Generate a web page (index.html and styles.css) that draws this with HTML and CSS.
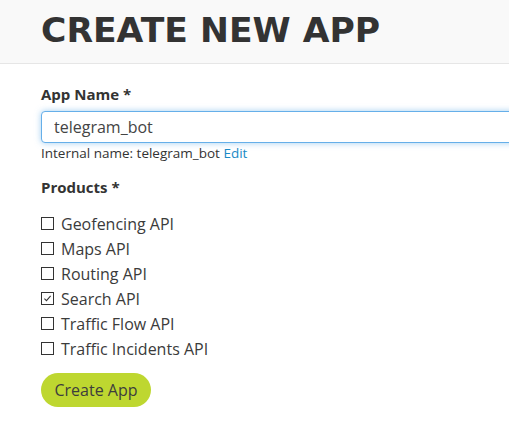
FILE: index.html
```html
<!DOCTYPE html>
<html>
<head>
<meta charset="utf-8">
<link rel="stylesheet" href="styles.css">
</head>
<body>
<header class="page-header">
  <h1 class="title">CREATE NEW APP</h1>
</header>
<main class="content">
  <form class="app-form">
    <label class="field-label" for="appname">App Name *</label>
    <div class="input-wrap">
      <input id="appname" class="text-input" type="text" value="telegram_bot">
    </div>
    <p class="hint">Internal name: telegram_bot <a class="link" href="#">Edit</a></p>
    <div class="field-label products-label">Products *</div>
    <ul class="product-list">
      <li class="product"><span class="box"></span>Geofencing API</li>
      <li class="product"><span class="box"></span>Maps API</li>
      <li class="product"><span class="box"></span>Routing API</li>
      <li class="product"><span class="box checked"><svg viewBox="0 0 13 13" width="13" height="13"><path d="M2.8 6.6 L5.3 9.1 L10.2 3.4" fill="none" stroke="#333" stroke-width="1.2"/></svg></span>Search API</li>
      <li class="product"><span class="box"></span>Traffic Flow API</li>
      <li class="product"><span class="box"></span>Traffic Incidents API</li>
    </ul>
    <button class="btn" type="button">Create App</button>
  </form>
</main>
</body>
</html>
```
FILE: styles.css
```css
html, body {
  margin: 0;
  padding: 0;
  background: #fff;
  overflow: hidden;
}
body {
  font-family: "Open Sans", "Liberation Sans", sans-serif;
  color: #3b3b3b;
}
.page-header {
  background: #f9f9f9;
  border-bottom: 1px solid #e6e6e6;
  height: 63px;
  padding-left: 41px;
  box-sizing: content-box;
  display: flex;
  align-items: center;
}
.title {
  margin: 0;
  font-family: "DejaVu Sans", sans-serif;
  font-weight: bold;
  font-size: 34.6px;
  line-height: 1;
  color: #333;
  position: relative;
  top: -1px;
}
.content {
  padding: 20px 0 0 41px;
  overflow: hidden;
}
.app-form {
  display: flex;
  flex-direction: column;
  align-items: flex-start;
}
.field-label {
  font-weight: bold;
  font-size: 15px;
  line-height: 20px;
  color: #333;
}
.input-wrap {
  margin-top: 7px;
  width: 520px;
}
.text-input {
  box-sizing: border-box;
  display: block;
  width: 100%;
  height: 32px;
  border: 1px solid #66afe9;
  border-radius: 4px;
  box-shadow: 0 0 6px rgba(102, 175, 233, 0.6);
  padding: 0 12px;
  font-family: "Open Sans", "Liberation Sans", sans-serif;
  font-size: 16px;
  color: #444;
  outline: none;
}
.hint {
  margin: 1px 0 0;
  font-size: 13.5px;
  line-height: 18px;
  color: #333;
}
.link {
  color: #1a8ac6;
  text-decoration: none;
}
.products-label {
  margin-top: 15px;
}
.product-list {
  list-style: none;
  margin: 14px 0 0;
  padding: 0;
}
.product {
  display: flex;
  align-items: center;
  height: 25px;
  font-size: 16px;
  color: #3b3b3b;
}
.box {
  box-sizing: border-box;
  width: 13px;
  height: 13px;
  border: 1px solid #333;
  margin-right: 7px;
  display: flex;
  align-items: center;
  justify-content: center;
}
.box svg {
  display: block;
}
.btn {
  margin-top: 12px;
  width: 110px;
  height: 34px;
  border: none;
  border-radius: 17px;
  background: #bed730;
  font-family: "Open Sans", "Liberation Sans", sans-serif;
  font-size: 16px;
  color: #3d3d3d;
  padding: 0;
}
```
